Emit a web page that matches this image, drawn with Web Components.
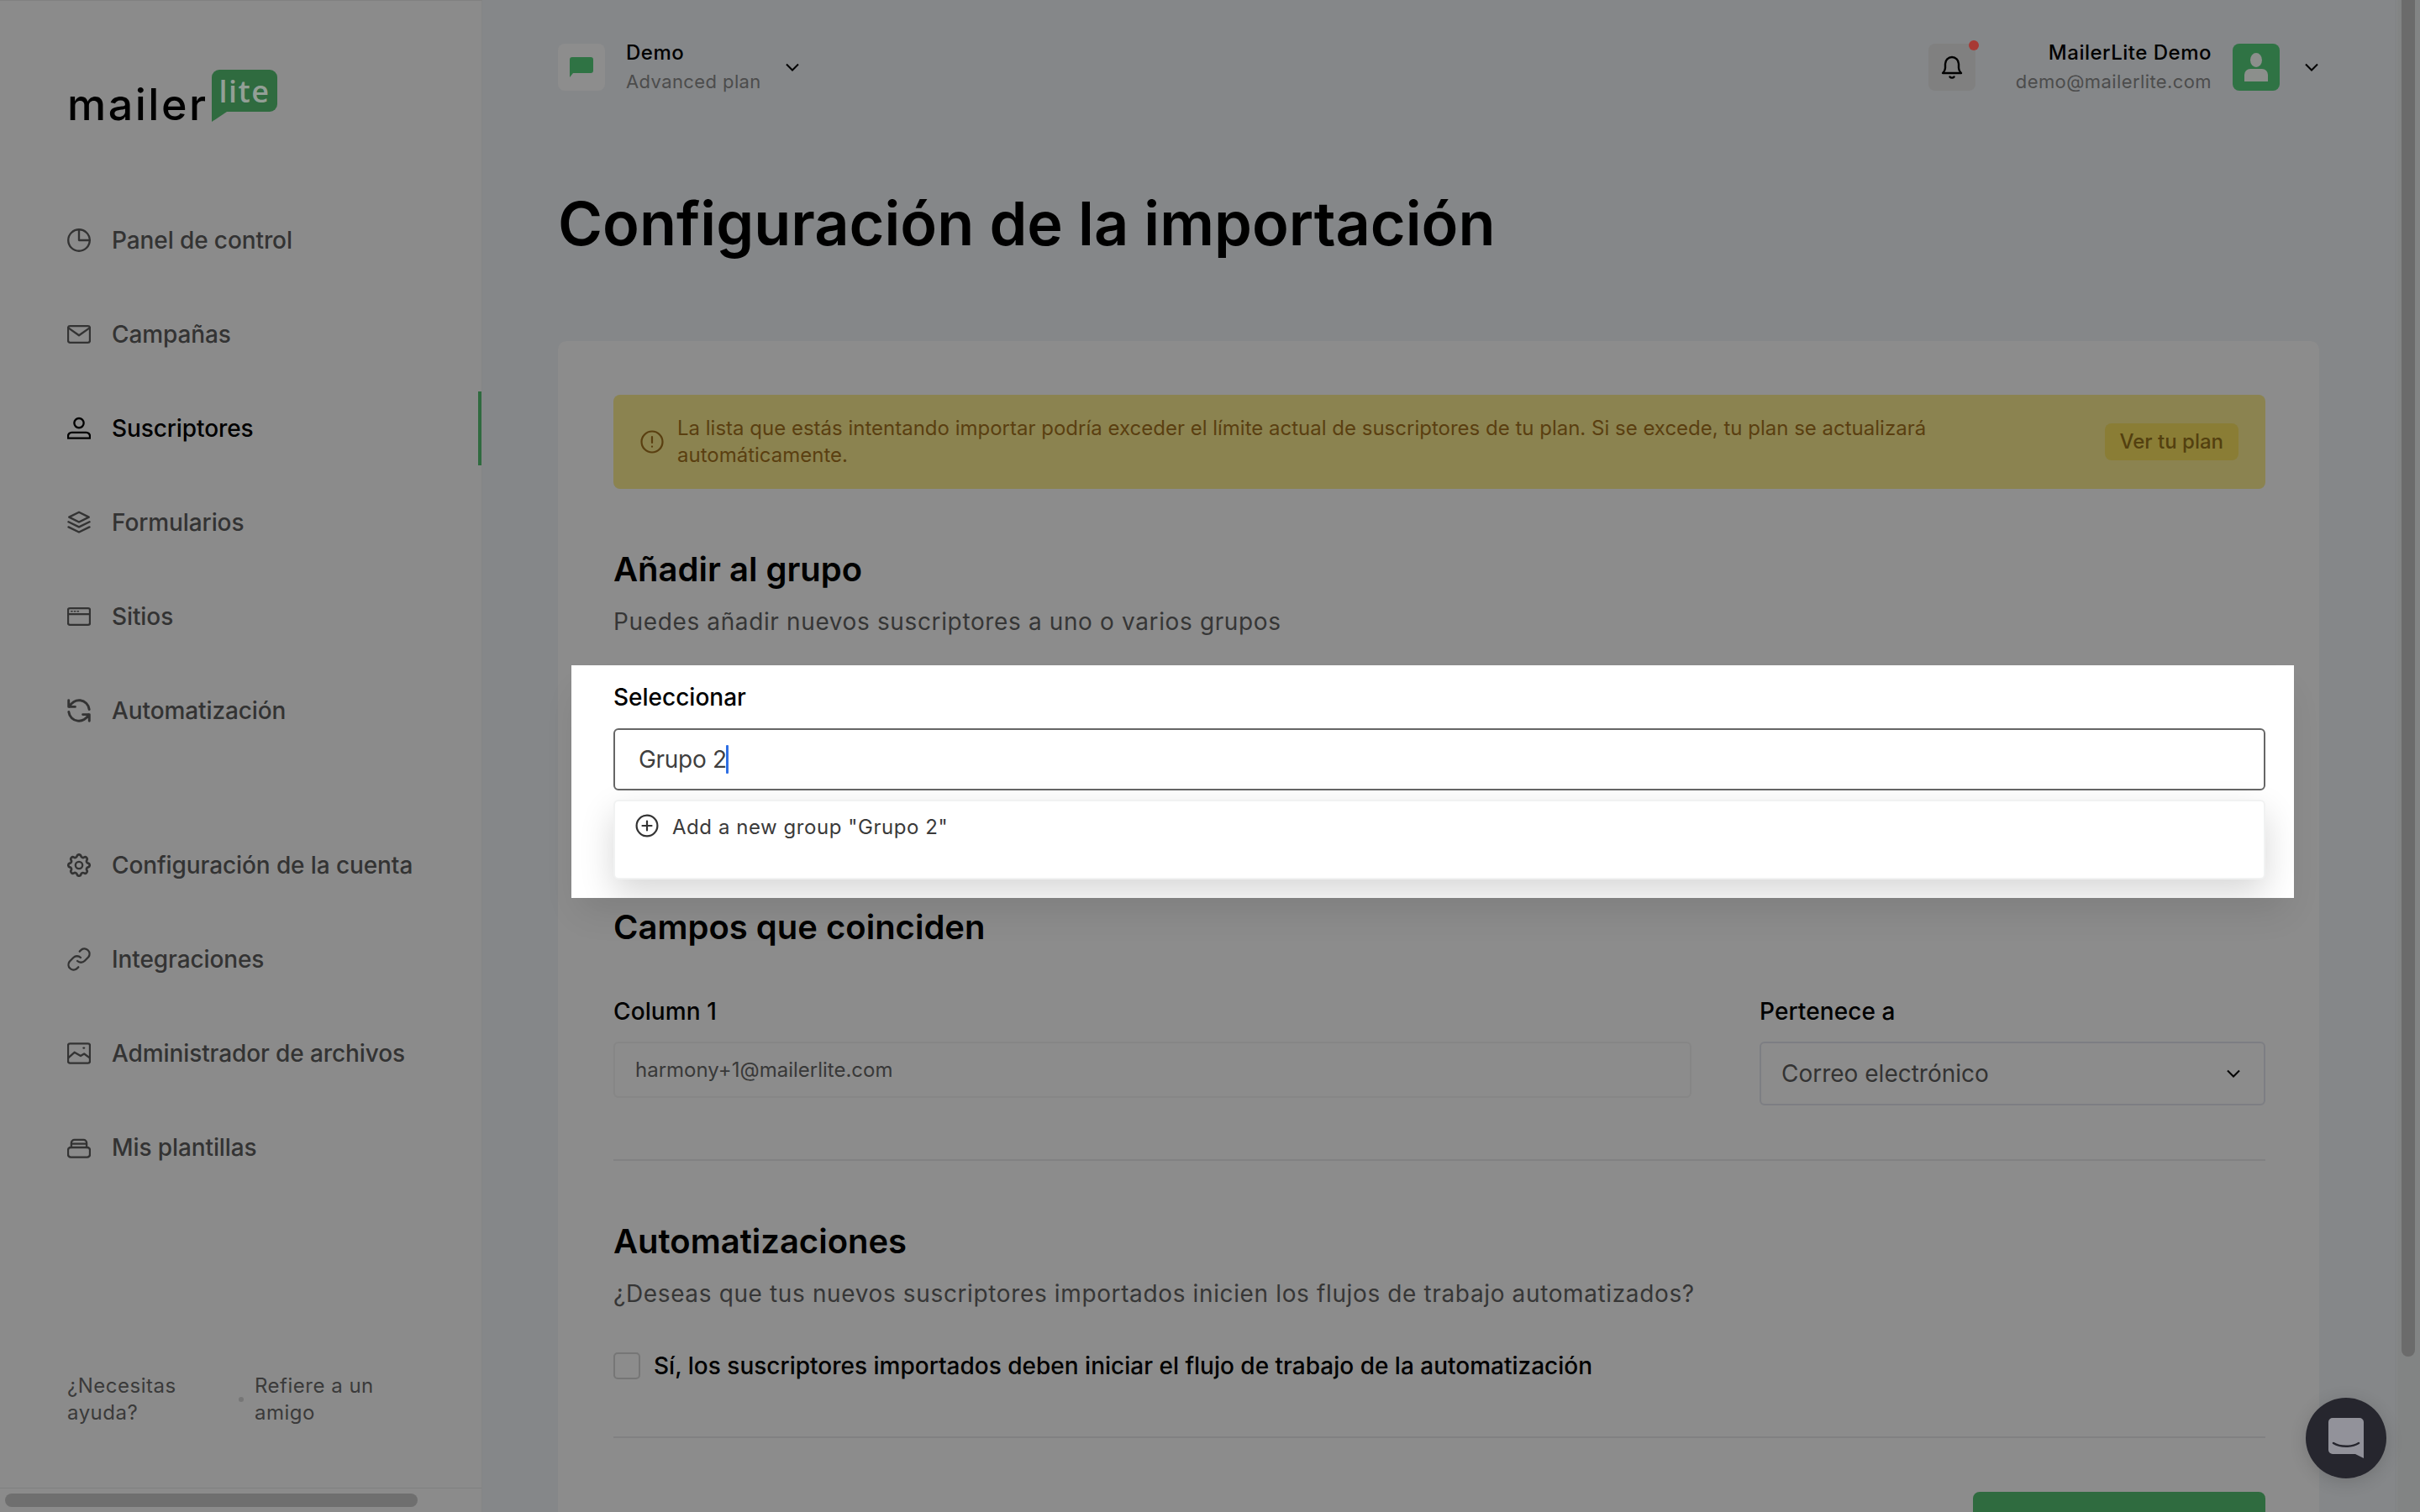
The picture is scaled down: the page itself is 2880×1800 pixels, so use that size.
<!DOCTYPE html>
<html lang="es">
<head>
<meta charset="utf-8">
<title>Configuración de la importación</title>
<style>
  html, body { margin: 0; height: 100%; overflow: hidden; background: #858789; }
  body { font-family: Inter, "Liberation Sans", sans-serif; }
</style>
</head>
<body>
<ml-app>
  <ml-sidebar slot="sidebar">
    <ml-nav-item icon="pie">Panel de control</ml-nav-item>
    <ml-nav-item icon="mail">Campañas</ml-nav-item>
    <ml-nav-item icon="user" active>Suscriptores</ml-nav-item>
    <ml-nav-item icon="layers">Formularios</ml-nav-item>
    <ml-nav-item icon="browser">Sitios</ml-nav-item>
    <ml-nav-item icon="refresh">Automatización</ml-nav-item>
    <ml-nav-item slot="lower" icon="gear">Configuración de la cuenta</ml-nav-item>
    <ml-nav-item slot="lower" icon="link">Integraciones</ml-nav-item>
    <ml-nav-item slot="lower" icon="image">Administrador de archivos</ml-nav-item>
    <ml-nav-item slot="lower" icon="stack">Mis plantillas</ml-nav-item>
  </ml-sidebar>

  <ml-topbar slot="main"></ml-topbar>
  <ml-page-title slot="main">Configuración de la importación</ml-page-title>

  <ml-card slot="main">
    <ml-notice action="Ver tu plan">La lista que estás intentando importar podría exceder el límite actual de suscriptores de tu plan. Si se excede, tu plan se actualizará automáticamente.</ml-notice>
    <ml-section-head class="first" sub="Puedes añadir nuevos suscriptores a uno o varios grupos">Añadir al grupo</ml-section-head>
    <ml-group-picker value="Grupo 2"></ml-group-picker>
    <ml-section-head class="campos">Campos que coinciden</ml-section-head>
    <ml-match-row></ml-match-row>
    <ml-rule class="r1"></ml-rule>
    <ml-section-head class="auto" sub="¿Deseas que tus nuevos suscriptores importados inicien los flujos de trabajo automatizados?">Automatizaciones</ml-section-head>
    <ml-check>Sí, los suscriptores importados deben iniciar el flujo de trabajo de la automatización</ml-check>
    <ml-rule class="r2"></ml-rule>
    <ml-submit></ml-submit>
  </ml-card>

  <ml-chat-button slot="overlay"></ml-chat-button>
</ml-app>

<script>
const ICONS = {
  pie: '<circle cx="12" cy="12" r="10.4"/><path d="M12 1.600V12h10.400"/>',
  mail: '<rect x="1.400" y="4" width="21.200" height="16" rx="2"/><path d="M2 6l10 7 10-7"/>',
  user: '<circle cx="12" cy="6.800" r="4.600"/><path d="M1.400 21.500v-2a3.500 3.500 0 0 1 3.500-3.500h14.200a3.500 3.500 0 0 1 3.500 3.500v2z"/>',
  layers: '<path d="M12 2l9.600 4.800L12 11.600 2.400 6.800z"/><path d="M1.800 11.400l10.200 5 10.200-5"/><path d="M1.800 16.400l10.200 5 10.200-5"/>',
  browser: '<rect x="1.400" y="4" width="21.200" height="16" rx="1.600"/><path d="M1.600 9.600h20.800"/><path d="M4.500 6.900h1M7.500 6.900h1M10.500 6.900h1" stroke-width="1.300"/>',
  refresh: '<path transform="translate(-3 -3) scale(1.250)" d="M4 4v5h.582m15.356 2A8.001 8.001 0 004.582 9m0 0H9m11 11v-5h-.581m0 0a8.003 8.003 0 01-15.357-2m15.357 2H15"/>',
  gear: '<path transform="translate(-1.800 -1.800) scale(1.150)" d="M10.325 4.317c.426-1.756 2.924-1.756 3.350 0a1.724 1.724 0 002.573 1.066c1.543-.94 3.310.826 2.370 2.370a1.724 1.724 0 001.065 2.572c1.756.426 1.756 2.924 0 3.350a1.724 1.724 0 00-1.066 2.573c.94 1.543-.826 3.310-2.370 2.370a1.724 1.724 0 00-2.572 1.065c-.426 1.756-2.924 1.756-3.350 0a1.724 1.724 0 00-2.573-1.066c-1.543.94-3.310-.826-2.370-2.370a1.724 1.724 0 00-1.065-2.572c-1.756-.426-1.756-2.924 0-3.350a1.724 1.724 0 001.066-2.573c-.94-1.543.826-3.310 2.370-2.370.996.608 2.296.07 2.572-1.065z"/><circle cx="12" cy="12" r="3.400"/>',
  link: '<path d="M13.600 10.400a5 5 0 0 0-7 0l-3.800 3.800a5 5 0 0 0 7 7l1.600-1.600"/><path d="M10.400 13.600a5 5 0 0 0 7 0l3.800-3.800a5 5 0 0 0-7-7l-1.600 1.600"/>',
  image: '<rect x="1.400" y="2.600" width="21.200" height="18.800" rx="1.800"/><path d="M1.600 16.400l6-5.400 6 3.400 3.400-2 5.400 4"/><path d="M16.400 6.800h.6"/>',
  stack: '<rect x="1.400" y="12" width="21.200" height="9.400" rx="2.600"/><path d="M4.600 12V7.600a3 3 0 0 1 3-3h8.800a3 3 0 0 1 3 3V12"/><path d="M5 8.400h14"/>'
};

function iconSvg(name, size) {
  return `<svg viewBox="0.600 0.600 22.800 22.800" width="${size}" height="${size}" fill="none" stroke="currentColor" stroke-width="1.900" stroke-linecap="round" stroke-linejoin="round">${ICONS[name]}</svg>`;
}

const CHEVRON = '<svg viewBox="0 0 18 12" width="18" height="12" fill="none" stroke="currentColor" stroke-width="2"><path d="M2 2.500l7 7 7-7"/></svg>';

class MlApp extends HTMLElement {
  constructor() {
    super();
    this.attachShadow({ mode: 'open' });
    this.shadowRoot.innerHTML = `
      <style>
        :host {
          display: grid;
          grid-template-columns: 574px 1fr 28px;
          width: 2880px;
          height: 1800px;
          overflow: hidden;
          position: relative;
          background: #858789;
          color: #000;
        }
        .main { min-width: 0; padding: 52px 92px 0 90px; border-right: 1px solid #7f8183; height: 1800px; box-sizing: border-box; overflow: hidden; }
        .track { background: #828484; border-left: 1px solid #888a8b; padding-left: 5px; }
        .thumb { width: 16px; height: 1615px; background: #6b6b6b; border-radius: 0 0 8px 8px; }
      </style>
      <slot name="sidebar"></slot>
      <div class="main"><slot name="main"></slot></div>
      <div class="track"><div class="thumb"></div></div>
      <slot name="overlay"></slot>
    `;
  }
}

class MlSidebar extends HTMLElement {
  constructor() {
    super();
    this.attachShadow({ mode: 'open' });
    this.shadowRoot.innerHTML = `
      <style>
        :host {
          display: flex;
          flex-direction: column;
          height: 1800px;
          box-sizing: border-box;
          background: #8b8b8b;
          border-right: 1px solid #848586;
          border-top: 1px solid #808080;
          padding-top: 82px;
        }
        .logo { display: flex; align-items: flex-end; gap: 12px; height: 62px; padding-left: 80px; }
        .word { font: 500 52px/62px Inter, sans-serif; letter-spacing: 2.500px; color: #000; width: 160px; margin-bottom: -11px; }
        .bubble {
          position: relative; box-sizing: border-box;
          width: 78px; height: 50px; margin-bottom: 12px; padding-top: 2px;
          background: #2f6b3f; border-radius: 9px 9px 9px 0;
          display: flex; align-items: center; justify-content: center;
          font: 600 36px/48px "Open Sans", sans-serif; letter-spacing: 1.500px; color: #939f96;
        }
        .bubble::after {
          content: ''; position: absolute; left: 0; top: 50px;
          border-top: 12px solid #2f6b3f; border-right: 18px solid transparent;
        }
        nav { display: flex; flex-direction: column; gap: 24px; margin-top: 97px; }
        nav.lower { margin-top: 96px; }
        .foot {
          margin-top: auto; padding: 0 0 73px 80px;
          display: grid; grid-template-columns: 204px 6px 190px; align-items: center;
          font: 400 24px/32px Inter, sans-serif; letter-spacing: .500px; color: #3a3a3a;
        }
        .foot i { width: 6px; height: 6px; border-radius: 50%; background: #767676; }
        .foot span:last-child { margin-left: 13px; }
        .hbar { height: 29px; box-sizing: border-box; border-top: 1px solid #7f8080; padding: 6px 0 0 6px; }
        .hbar div { width: 491px; height: 16px; border-radius: 8px; background: #6f6f6f; }
      </style>
      <div class="logo"><span class="word">mailer</span><span class="bubble">lite</span></div>
      <nav><slot></slot></nav>
      <nav class="lower"><slot name="lower"></slot></nav>
      <div class="foot"><span>¿Necesitas ayuda?</span><i></i><span>Refiere a un amigo</span></div>
      <div class="hbar"><div></div></div>
    `;
  }
}

class MlNavItem extends HTMLElement {
  connectedCallback() {
    if (this.shadowRoot) return;
    this.attachShadow({ mode: 'open' });
    const active = this.hasAttribute('active');
    this.shadowRoot.innerHTML = `
      <style>
        :host { display: block; }
        a {
          display: flex; align-items: center; gap: 25px;
          height: 88px; padding-left: 80px; box-sizing: border-box;
          font: 500 28px/40px Inter, sans-serif; letter-spacing: -.1px;
          color: ${active ? '#000' : '#333'};
          border-right: 4px solid ${active ? '#2f6b3f' : 'transparent'};
        }
        svg { flex: none; }
      </style>
      <a>${iconSvg(this.getAttribute('icon'), 28)}<span><slot></slot></span></a>
    `;
  }
}

class MlTopbar extends HTMLElement {
  constructor() {
    super();
    this.attachShadow({ mode: 'open' });
    this.shadowRoot.innerHTML = `
      <style>
        :host { display: flex; align-items: center; height: 56px; width: 2096px; }
        .box { position: relative; width: 56px; height: 56px; border-radius: 8px; background: #8d8d8d; display: flex; align-items: center; justify-content: center; flex: none; }
        .who { display: flex; flex-direction: column; margin-left: 25px; }
        .who b { font: 500 24px/34px Inter, sans-serif; letter-spacing: .500px; color: #000; }
        .who small { font: 400 22px/34px Inter, sans-serif; letter-spacing: .400px; color: #4c4c4c; }
        .chev { color: #000; display: flex; }
        .left { display: flex; align-items: center; }
        .left .chev { margin-left: 28px; }
        .right { display: flex; align-items: center; margin-left: auto; }
        .bell { background: #808080; }
        .dot { position: absolute; right: -4px; top: -4px; width: 12px; height: 12px; border-radius: 50%; background: #a83a34; }
        .right .who { text-align: right; margin: 0 25px 0 0; }
        .right .names { margin-left: 48px; }
        .avatar { background: #2f7344; }
        .right .chev { margin-left: 29px; }
      </style>
      <div class="left">
        <div class="box"><svg width="28" height="24" viewBox="0 0 28 24"><path d="M3 0h22a3 3 0 0 1 3 3v13a3 3 0 0 1-3 3H4l-4 5V3a3 3 0 0 1 3-3z" fill="#2f7344"/></svg></div>
        <div class="who"><b>Demo</b><small>Advanced plan</small></div>
        <span class="chev">${CHEVRON}</span>
      </div>
      <div class="right">
        <div class="box bell">
          <svg width="26" height="30" viewBox="0 0 26 30" fill="none" stroke="#000" stroke-width="2.400" stroke-linecap="round" stroke-linejoin="round"><path d="M2 22h22c-2-2-3-3.500-3-6v-5a8 8 0 0 0-16 0v5c0 2.500-1 4-3 6z"/><path d="M10.500 26.500c1.200 1.500 3.800 1.500 5 0"/></svg>
          <span class="dot"></span>
        </div>
        <div class="who names"><b>MailerLite Demo</b><small>demo@mailerlite.com</small></div>
        <div class="box avatar"><svg width="28" height="34" viewBox="0 0 28 34" fill="#8c8f8c"><ellipse cx="14" cy="8.500" rx="7" ry="8.500"/><path d="M0 34V26a7 7 0 0 1 7-7h14a7 7 0 0 1 7 7v8z"/></svg></div>
        <span class="chev">${CHEVRON}</span>
      </div>
    `;
  }
}

class MlPageTitle extends HTMLElement {
  constructor() {
    super();
    this.attachShadow({ mode: 'open' });
    this.shadowRoot.innerHTML = `
      <style>
        :host { display: block; margin-top: 110px; height: 188px; font: 600 72px/96px Inter, sans-serif; letter-spacing: 0; color: #000; }
      </style>
      <slot></slot>
    `;
  }
}

class MlCard extends HTMLElement {
  constructor() {
    super();
    this.attachShadow({ mode: 'open' });
    this.shadowRoot.innerHTML = `
      <style>
        :host {
          display: block; box-sizing: border-box; width: 2096px; height: 1500px;
          padding: 64px 64px 0 66px;
          background: #8c8c8c; border-radius: 10px;
        }
        ::slotted(.first) { margin-top: 68px; }
        ::slotted(.campos) { margin-top: 7px; }
        ::slotted(.r1) { margin-top: 64px; }
        ::slotted(.auto) { margin-top: 68px; }
        ::slotted(.r2) { margin-top: 68px; }
      </style>
      <slot></slot>
    `;
  }
}

class MlNotice extends HTMLElement {
  connectedCallback() {
    if (this.shadowRoot) return;
    this.attachShadow({ mode: 'open' });
    this.shadowRoot.innerHTML = `
      <style>
        :host {
          display: flex; align-items: center; height: 112px; box-sizing: border-box;
          padding: 0 32px; background: #8b8350; border-radius: 8px; color: #5a3f10;
        }
        svg { flex: none; }
        p { flex: 1; margin: 0 0 0 16px; max-width: 1600px; font: 400 24px/32px Inter, sans-serif; }
        button {
          all: unset; margin-left: auto; height: 44px; padding: 0 18px; border-radius: 8px;
          background: #8a7d35; font: 500 24px/44px Inter, sans-serif; color: #53400f;
        }
      </style>
      <svg viewBox="0 0 28 28" width="28" height="28" fill="none" stroke="currentColor" stroke-width="2.200" stroke-linecap="round"><circle cx="14" cy="14" r="12.500"/><path d="M14 8v7"/><path d="M14 19.500v.2"/></svg>
      <p><slot></slot></p>
      <button>${this.getAttribute('action')}</button>
    `;
  }
}

class MlSectionHead extends HTMLElement {
  connectedCallback() {
    if (this.shadowRoot) return;
    this.attachShadow({ mode: 'open' });
    const sub = this.getAttribute('sub');
    this.shadowRoot.innerHTML = `
      <style>
        :host { display: block; }
        h2 { margin: 0; font: 600 40px/56px Inter, sans-serif; color: #000; }
        p { margin: 10px 0 0; font: 400 28px/48px Inter, sans-serif; letter-spacing: .630px; color: #363636; height: 48px; }
      </style>
      <h2><slot></slot></h2>
      ${sub ? `<p>${sub}</p>` : ''}
    `;
  }
}

class MlGroupPicker extends HTMLElement {
  connectedCallback() {
    if (this.shadowRoot) return;
    this.attachShadow({ mode: 'open' });
    const value = this.getAttribute('value');
    this.shadowRoot.innerHTML = `
      <style>
        :host {
          display: block; box-sizing: border-box; height: 277px;
          margin: 28px -34px 0 -50px; padding: 18px 34px 0 50px;
          background: #fff; overflow: hidden;
          box-shadow: 0 24px 40px -10px rgba(0,0,0,.1);
          position: relative;
        }
        label { display: block; font: 500 28px/40px Inter, sans-serif; color: #000; }
        .input {
          display: flex; align-items: center; box-sizing: border-box; height: 74px; margin-top: 17px;
          padding-left: 28px; border: 2px solid #666; border-radius: 6px; background: #fff;
          font: 400 28px/40px Inter, sans-serif; letter-spacing: -.300px; color: #3f3f3f;
        }
        .caret { display: inline-block; width: 3px; height: 34px; background: #2f6fe4; margin-left: -1px; border-radius: 1px; }
        .menu {
          box-sizing: border-box; height: 95px; margin-top: 11px; padding: 15px 0 0 24px;
          border: 2px solid #f1f2f2; border-radius: 6px; background: #fff;
          box-shadow: 0 16px 40px rgba(0,0,0,.16);
          display: flex; align-items: flex-start; gap: 16px;
          font: 400 24px/32px Inter, sans-serif; letter-spacing: .550px; color: #3a3a3a;
        }
      </style>
      <label>Seleccionar</label>
      <div class="input"><span>${value}</span><i class="caret"></i></div>
      <div class="menu">
        <svg viewBox="0 0 28 28" width="28" height="28" fill="none" stroke="#333" stroke-width="2.200" stroke-linecap="round"><circle cx="14" cy="14" r="12.400"/><path d="M14 8.500v11M8.500 14h11"/></svg>
        <span>Add a new group "${value}"</span>
      </div>
    `;
  }
}

class MlMatchRow extends HTMLElement {
  constructor() {
    super();
    this.attachShadow({ mode: 'open' });
    this.shadowRoot.innerHTML = `
      <style>
        :host { display: grid; grid-template-columns: 1283px 602px; column-gap: 81px; margin-top: 52px; align-items: start; }
        label { display: block; height: 40px; margin-bottom: 16px; font: 500 28px/40px Inter, sans-serif; letter-spacing: .100px; color: #000; }
        .ro {
          box-sizing: border-box; height: 67px; padding-left: 24px; border: 2px solid #868686; border-radius: 6px;
          font: 400 24px/63px Inter, sans-serif; color: #383838;
        }
        .sel {
          box-sizing: border-box; height: 76px; padding: 0 27px 0 24px; border: 2px solid #7d7e83; border-radius: 6px;
          display: flex; align-items: center; justify-content: space-between;
          font: 400 28px/40px Inter, sans-serif; color: #333;
        }
        .sel span + span { display: flex; color: #000; }
      </style>
      <div><label>Column 1</label><div class="ro">harmony+1@mailerlite.com</div></div>
      <div><label>Pertenece a</label><div class="sel"><span>Correo electrónico</span><span>${CHEVRON}</span></div></div>
    `;
  }
}

class MlRule extends HTMLElement {
  constructor() {
    super();
    this.attachShadow({ mode: 'open' });
    this.shadowRoot.innerHTML = `<style>:host { display: block; height: 2px; background: #818182; }</style>`;
  }
}

class MlCheck extends HTMLElement {
  constructor() {
    super();
    this.attachShadow({ mode: 'open' });
    this.shadowRoot.innerHTML = `
      <style>
        :host { display: flex; align-items: center; gap: 16px; margin-top: 46px; height: 32px; font: 500 28px/40px Inter, sans-serif; color: #000; }
        i { box-sizing: border-box; width: 32px; height: 32px; border: 2px solid #767676; border-radius: 5px; flex: none; }
      </style>
      <i></i><span><slot></slot></span>
    `;
  }
}

class MlSubmit extends HTMLElement {
  constructor() {
    super();
    this.attachShadow({ mode: 'open' });
    this.shadowRoot.innerHTML = `
      <style>
        :host { display: flex; justify-content: flex-end; margin-top: 64px; }
        div { width: 348px; height: 88px; background: #2f6b3f; border-radius: 8px; }
      </style>
      <div></div>
    `;
  }
}

class MlChatButton extends HTMLElement {
  constructor() {
    super();
    this.attachShadow({ mode: 'open' });
    this.shadowRoot.innerHTML = `
      <style>
        :host {
          position: absolute; left: 2744px; top: 1664px; width: 96px; height: 96px; border-radius: 50%;
          background: #26262e; display: flex; align-items: center; justify-content: center;
          box-shadow: 0 4px 20px rgba(0,0,0,.15);
        }
      </style>
      <svg width="42" height="48" viewBox="0 0 42 48"><path d="M5 0h32a5 5 0 0 1 5 5v43l-10-5H5a5 5 0 0 1-5-5V5a5 5 0 0 1 5-5z" fill="#92929a"/><path d="M6 30c8 5 22 5 30 0" fill="none" stroke="#26262e" stroke-width="2.500" stroke-linecap="round"/></svg>
    `;
  }
}

customElements.define('ml-app', MlApp);
customElements.define('ml-sidebar', MlSidebar);
customElements.define('ml-nav-item', MlNavItem);
customElements.define('ml-topbar', MlTopbar);
customElements.define('ml-page-title', MlPageTitle);
customElements.define('ml-card', MlCard);
customElements.define('ml-notice', MlNotice);
customElements.define('ml-section-head', MlSectionHead);
customElements.define('ml-group-picker', MlGroupPicker);
customElements.define('ml-match-row', MlMatchRow);
customElements.define('ml-rule', MlRule);
customElements.define('ml-check', MlCheck);
customElements.define('ml-submit', MlSubmit);
customElements.define('ml-chat-button', MlChatButton);
</script>
</body>
</html>
